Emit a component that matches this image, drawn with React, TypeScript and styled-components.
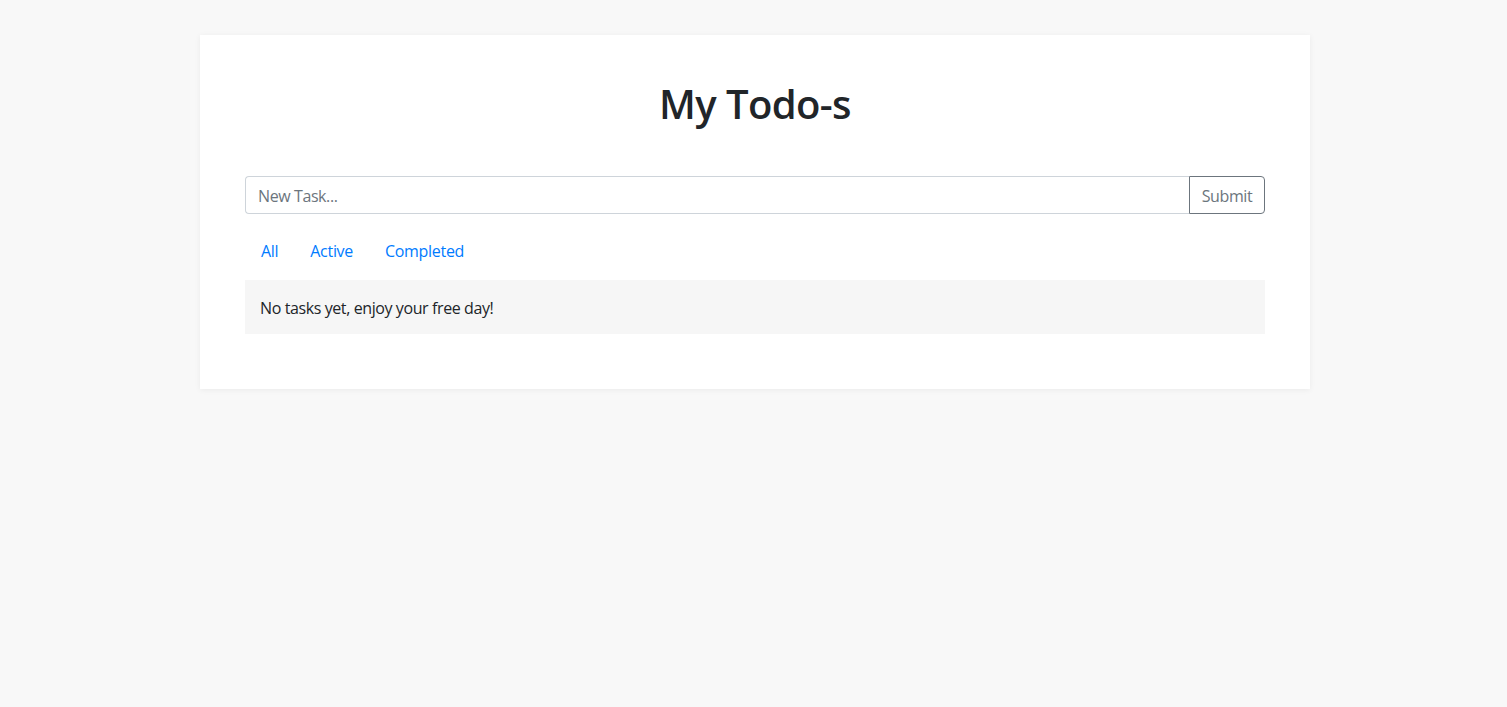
import React, { useState } from "react";
import styled, { createGlobalStyle } from "styled-components";

const GlobalStyle = createGlobalStyle`
  html, body {
    margin: 0;
    padding: 0;
    background: #f8f8f8;
    font-family: "Open Sans", "Noto Sans", sans-serif;
    font-size: 16px;
    color: #212529;
  }
  * { box-sizing: border-box; }
`;

const Page = styled.div`
  display: flex;
  justify-content: center;
  align-items: flex-start;
  padding: 35px 0 0 3px;
  min-height: 707px;
`;

const Card = styled.main`
  width: 1110px;
  background: #ffffff;
  box-shadow: 0 1px 6px rgba(0, 0, 0, 0.06);
  padding: 45px 45px 55px;
  display: flex;
  flex-direction: column;
`;

const Title = styled.h1`
  margin: 0 0 48px;
  text-align: center;
  font-size: 40px;
  line-height: 48px;
  font-weight: 600;
  color: #212529;
  letter-spacing: -0.6px;
`;

const Form = styled.form`
  display: flex;
  height: 38px;
`;

const TaskInput = styled.input`
  flex: 1;
  min-width: 0;
  height: 38px;
  padding: 7px 12px 5px;
  font: inherit;
  font-size: 16px;
  color: #495057;
  border: 1px solid #ced4da;
  border-right: none;
  border-radius: 4px 0 0 4px;
  outline: none;
  letter-spacing: -0.4px;
  &::placeholder { color: #6c757d; }
`;

const SubmitButton = styled.button`
  width: 76px;
  height: 38px;
  padding: 1px 0 0;
  font: inherit;
  font-size: 16px;
  color: #6c757d;
  background: transparent;
  border: 1px solid #6c757d;
  border-radius: 0 4px 4px 0;
  cursor: pointer;
  letter-spacing: -0.4px;
`;

const Filters = styled.nav`
  display: flex;
  margin-top: 16px;
  height: 40px;
  align-items: center;
`;

const FilterLink = styled.a`
  padding: 9px 16px 7px;
  color: #007bff;
  text-decoration: none;
  font-size: 16px;
  line-height: 24px;
  letter-spacing: -0.3px;
  cursor: pointer;
`;

const TaskList = styled.ul`
  list-style: none;
  margin: 10px 0 0;
  padding: 0;
`;

const EmptyItem = styled.li`
  background: #f6f6f6;
  padding: 16px 15px 14px;
  height: 54px;
  line-height: 24px;
  font-size: 16px;
  letter-spacing: -0.4px;
  color: #212529;
`;

export default function App() {
  const [value, setValue] = useState("");
  return (
    <>
      <GlobalStyle />
      <Page>
        <Card>
          <Title>My Todo-s</Title>
          <Form onSubmit={(e) => e.preventDefault()}>
            <TaskInput
              placeholder="New Task..."
              value={value}
              onChange={(e) => setValue(e.target.value)}
            />
            <SubmitButton type="submit">Submit</SubmitButton>
          </Form>
          <Filters>
            <FilterLink>All</FilterLink>
            <FilterLink>Active</FilterLink>
            <FilterLink>Completed</FilterLink>
          </Filters>
          <TaskList>
            <EmptyItem>No tasks yet, enjoy your free day!</EmptyItem>
          </TaskList>
        </Card>
      </Page>
    </>
  );
}
